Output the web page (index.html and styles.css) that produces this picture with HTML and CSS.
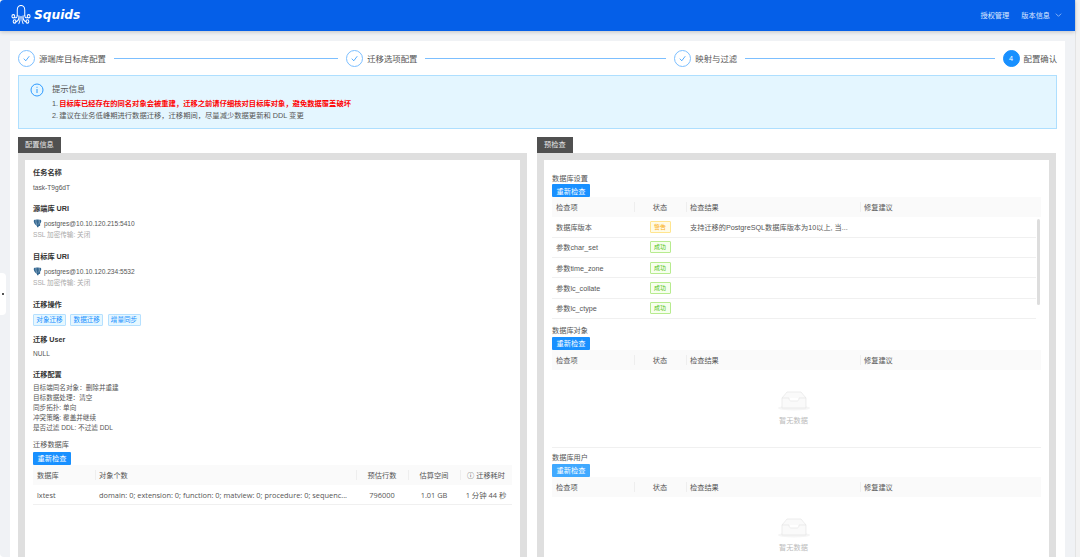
FILE: index.html
```html
<!DOCTYPE html>
<html lang="zh-CN">
  <head>
    <meta charset="UTF-8" />
    <meta name="viewport" content="width=device-width, initial-scale=1.0" />
    <title>Squids</title>
    <link rel="stylesheet" href="styles.css">
  </head>
  <body>
    <div class="app">
      <header class="topbar">
        <div class="brand">
          <svg class="brand-icon" viewBox="0 2 24 20.500" preserveAspectRatio="none" fill="none" stroke="#fff" stroke-width="1.2" stroke-linecap="round">
            <path d="M7.500 12.500V7a4.500 4.500 0 0 1 9 0v5.500" />
            <path d="M7.500 12.500c0 2.500-1.500 3-3.500 2.300" />
            <path d="M9.500 13c.3 3.500-1 5.500-3.500 6" />
            <path d="M11 14c0 3-.5 5.500-1.500 7" />
            <path d="M13 14c0 3 .5 5.500 1.500 7" />
            <path d="M14.500 13c-.3 3.500 1 5.500 3.500 6" />
            <path d="M16.500 12.500c0 2.500 1.500 3 3.500 2.300" />
            <circle cx="2.800" cy="13.500" r="1.700" />
            <circle cx="21.200" cy="13.500" r="1.700" />
            <circle cx="4.300" cy="18.800" r="1.700" />
            <circle cx="19.700" cy="18.800" r="1.700" />
          </svg>
          <span class="brand-name">Squids</span>
        </div>
        <nav class="topnav">
          <span>授权管理</span>
          <span>版本信息
            <svg class="chevron" viewBox="0 0 10 6" fill="none" stroke="#dce8ff" stroke-width="0.9"><path d="M1 1l4 4 4-4" /></svg>
          </span>
        </nav>
      </header>

      <div class="side-handle"><i></i></div>

      <main class="content">
        <section class="card">
          <div class="steps">
            <div class="step">
              <span class="step-icon"><svg viewBox="0 0 12 12" fill="none" stroke="#1890ff" stroke-width="0.8"><path d="M3 6.200l2.200 2.300L9 3.500" /></svg></span>
              <span class="step-label">源端库目标库配置</span>
              <span class="step-line"></span>
            </div>
            <div class="step">
              <span class="step-icon"><svg viewBox="0 0 12 12" fill="none" stroke="#1890ff" stroke-width="0.8"><path d="M3 6.200l2.200 2.300L9 3.500" /></svg></span>
              <span class="step-label">迁移选项配置</span>
              <span class="step-line"></span>
            </div>
            <div class="step">
              <span class="step-icon"><svg viewBox="0 0 12 12" fill="none" stroke="#1890ff" stroke-width="0.8"><path d="M3 6.200l2.200 2.300L9 3.500" /></svg></span>
              <span class="step-label">映射与过滤</span>
              <span class="step-line"></span>
            </div>
            <div class="step step-last">
              <span class="step-icon step-icon-active">4</span>
              <span class="step-label">配置确认</span>
            </div>
          </div>

          <div class="alert">
            <svg class="alert-icon" viewBox="0 0 14 14" fill="none" stroke="#1890ff" stroke-width="0.9">
              <circle cx="7" cy="7" r="6" />
              <path d="M7 6v4M7 3.800v1" />
            </svg>
            <div>
              <div class="alert-title">提示信息</div>
              <ul class="alert-list">
                <li><span class="num">1. </span><span class="danger">目标库已经存在的同名对象会被重建，迁移之前请仔细核对目标库对象，避免数据覆盖破坏</span></li>
                <li><span class="num">2. </span>建议在业务低峰期进行数据迁移，迁移期间，尽量减少数据更新和 DDL 变更</li>
              </ul>
            </div>
          </div>

          <div class="columns">
            <div class="column">
              <span class="panel-tab">配置信息</span>
              <div class="panel">
                <div class="field field-name">
                  <h4>任务名称</h4>
                  <p>task-T9g6dT</p>
                </div>
                <div class="field field-uri">
                  <h4>源端库 URI</h4>
                  <p class="uri">
                    <svg class="pg-icon" viewBox="0 0 12 12"><path fill="#336791" d="M1 2.500C1 1 2.500.6 4 1c1-.5 3-.5 4 0 1.500-.4 3 0 3 1.500 0 1.500-.8 3-1.500 3.500v2.500c0 1-1 1-1.500.5L7 11H5.500L5 8.500C3.500 8.500 1 5 1 2.500z" /><path fill="none" stroke="#fff" stroke-width=".5" d="M4 1.200C3.500 4 4.500 7 5.500 8M8 1.200c.7 2 .5 4-.5 6" /></svg>
                    postgres@10.10.120.215:5410
                  </p>
                  <p class="muted">SSL 加密传输: 关闭</p>
                </div>
                <div class="field field-uri">
                  <h4>目标库 URI</h4>
                  <p class="uri">
                    <svg class="pg-icon" viewBox="0 0 12 12"><path fill="#336791" d="M1 2.500C1 1 2.500.6 4 1c1-.5 3-.5 4 0 1.500-.4 3 0 3 1.500 0 1.500-.8 3-1.500 3.500v2.500c0 1-1 1-1.500.5L7 11H5.500L5 8.500C3.500 8.500 1 5 1 2.500z" /><path fill="none" stroke="#fff" stroke-width=".5" d="M4 1.200C3.500 4 4.500 7 5.500 8M8 1.200c.7 2 .5 4-.5 6" /></svg>
                    postgres@10.10.120.234:5532
                  </p>
                  <p class="muted">SSL 加密传输: 关闭</p>
                </div>
                <div class="field field-ops">
                  <h4>迁移操作</h4>
                  <div class="tags">
                    <span class="tag">对象迁移</span>
                    <span class="tag">数据迁移</span>
                    <span class="tag">增量同步</span>
                  </div>
                </div>
                <div class="field field-user">
                  <h4>迁移 User</h4>
                  <p>NULL</p>
                </div>
                <div class="field field-config">
                  <h4>迁移配置</h4>
                  <p>目标端同名对象：删除并重建</p>
                  <p>目标数据处理：清空</p>
                  <p>同步拓扑: 单向</p>
                  <p>冲突策略: 覆盖并继续</p>
                  <p>是否过滤 DDL: 不过滤 DDL</p>
                </div>
                <div class="sub-title sub-title-db">迁移数据库</div>
                <button class="btn" type="button">重新检查</button>
                <table class="table table-db">
                  <thead>
                    <tr>
                      <th class="col-db">数据库</th>
                      <th>对象个数</th>
                      <th class="col-rows center">预估行数</th>
                      <th class="col-size center">估算空间</th>
                      <th class="col-time center">&#9432; 迁移耗时</th>
                    </tr>
                  </thead>
                  <tbody>
                    <tr>
                      <td>lxtest</td>
                      <td class="nowrap">domain: 0; extension: 0; function: 0; matview: 0; procedure: 0; sequenc...</td>
                      <td class="center">796000</td>
                      <td class="center">1.01 GB</td>
                      <td class="center">1 分钟 44 秒</td>
                    </tr>
                  </tbody>
                </table>
              </div>
            </div>

            <div class="column">
              <span class="panel-tab">预检查</span>
              <div class="panel panel-check">
                <div class="sub-title">数据库设置</div>
                <button class="btn" type="button">重新检查</button>
                <table class="table table-check">
                  <thead>
                    <tr><th class="col-item">检查项</th><th class="col-status center">状态</th><th class="col-result">检查结果</th><th>修复建议</th></tr>
                  </thead>
                </table>
                <div class="scroll-body">
                  <table class="table table-check">
                    <tbody>
                      <tr><td class="col-item">数据库版本</td><td class="col-status center"><span class="status status-warn">警告</span></td><td class="col-result nowrap">支持迁移的PostgreSQL数据库版本为10以上, 当...</td><td></td></tr>
                      <tr><td class="col-item">参数char_set</td><td class="col-status center"><span class="status status-ok">成功</span></td><td></td><td></td></tr>
                      <tr><td class="col-item">参数time_zone</td><td class="col-status center"><span class="status status-ok">成功</span></td><td></td><td></td></tr>
                      <tr><td class="col-item">参数lc_collate</td><td class="col-status center"><span class="status status-ok">成功</span></td><td></td><td></td></tr>
                      <tr><td class="col-item">参数lc_ctype</td><td class="col-status center"><span class="status status-ok">成功</span></td><td></td><td></td></tr>
                    </tbody>
                  </table>
                  <span class="scroll-thumb"></span>
                </div>

                <div class="sub-title sub-title-next">数据库对象</div>
                <button class="btn" type="button">重新检查</button>
                <table class="table table-check">
                  <thead>
                    <tr><th class="col-item">检查项</th><th class="col-status center">状态</th><th class="col-result">检查结果</th><th>修复建议</th></tr>
                  </thead>
                </table>
                <div class="empty">
                  <svg class="empty-icon" viewBox="0 0 32 20"><ellipse cx="16" cy="17" rx="16" ry="2.500" fill="#f5f5f5" /><path fill="#fafafa" stroke="#e3e3e3" stroke-width=".6" d="M4 7l5-6h14l5 6v10H4z" /><path fill="#fff" stroke="#e3e3e3" stroke-width=".6" d="M4 7h7c0 2 1 3 2 3h6c1 0 2-1 2-3h7" /></svg>
                  <span>暂无数据</span>
                </div>

                <div class="sub-title">数据库用户</div>
                <button class="btn btn-light" type="button">重新检查</button>
                <table class="table table-check">
                  <thead>
                    <tr><th class="col-item">检查项</th><th class="col-status center">状态</th><th class="col-result">检查结果</th><th>修复建议</th></tr>
                  </thead>
                </table>
                <div class="empty">
                  <svg class="empty-icon" viewBox="0 0 32 20"><ellipse cx="16" cy="17" rx="16" ry="2.500" fill="#f5f5f5" /><path fill="#fafafa" stroke="#e3e3e3" stroke-width=".6" d="M4 7l5-6h14l5 6v10H4z" /><path fill="#fff" stroke="#e3e3e3" stroke-width=".6" d="M4 7h7c0 2 1 3 2 3h6c1 0 2-1 2-3h7" /></svg>
                  <span>暂无数据</span>
                </div>
              </div>
            </div>
          </div>
        </section>
      </main>
    </div>
    <div class="page-scrollbar"></div>
  </body>
</html>
```

FILE: styles.css
```css
* {
  box-sizing: border-box;
}
html,
body {
  height: 100%;
  margin: 0;
  overflow: hidden;
}
body {
  display: flex;
  background-color: #fff;
  color: #555;
  font-family: "Liberation Sans", "Noto Sans CJK SC", sans-serif;
  font-size: 7.2px;
}
h4,
p,
ul {
  margin: 0;
  padding: 0;
}
.app {
  position: relative;
  flex: 1;
  min-width: 0;
  background-color: #f0f2f5;
  border-radius: 4px 0 0 4px;
}
.page-scrollbar {
  width: 5px;
  background-color: #f3f3f3;
  border-left: 1px solid #e4e4e4;
}

/* 頂部導航 */
.topbar {
  height: 31px;
  padding: 0 13px 1px 11px;
  display: flex;
  align-items: center;
  justify-content: space-between;
  background-color: #055fe8;
  border-top-left-radius: 4px;
  box-shadow: 0 1px 4px rgba(0, 0, 0, 0.2);
}
.brand {
  display: flex;
  align-items: center;
  gap: 3px;
}
.brand-icon {
  width: 20px;
  height: 20px;
}
.brand-name {
  color: #fff;
  font-family: "DejaVu Sans", sans-serif;
  font-size: 12.200px;
  font-weight: 700;
  font-style: italic;
}
.topnav {
  display: flex;
  gap: 12px;
  color: #dce8ff;
}
.chevron {
  width: 7px;
  height: 4px;
  margin-left: 3px;
  vertical-align: 1px;
}
.side-handle {
  position: absolute;
  left: 0;
  top: 273px;
  width: 6px;
  height: 42px;
  display: flex;
  align-items: center;
  justify-content: center;
  background-color: #fff;
  border-radius: 0 4px 4px 0;
}
.side-handle i {
  width: 2px;
  height: 2px;
  background-color: #555;
}

/* 內容卡片 */
.content {
  padding: 10px 10px 0;
}
.card {
  height: 520px;
  padding: 8px;
  background-color: #fff;
}
.steps {
  display: flex;
  height: 18px;
  align-items: center;
}
.step {
  flex: 1;
  display: flex;
  align-items: center;
}
.step-last {
  flex: none;
}
.step-icon {
  width: 17px;
  height: 17px;
  flex: none;
  display: flex;
  align-items: center;
  justify-content: center;
  border: 1px solid #7cbfff;
  border-radius: 50%;
}
.step-icon svg {
  width: 11px;
  height: 11px;
}
.step-icon-active {
  background-color: #1890ff;
  border-color: #1890ff;
  color: #fff;
  font-size: 7.2px;
}
.step-label {
  margin-left: 4px;
  color: #555;
  font-size: 8.4px;
  white-space: nowrap;
}
.step-line {
  flex: 1;
  height: 1px;
  margin: 0 8px;
  background-color: #7cbfff;
}

/* 提示信息 */
.alert {
  display: flex;
  gap: 8px;
  height: 54px;
  margin-top: 8px;
  padding: 7px 11px;
  background-color: #e4f6ff;
  border: 1px solid #aedfff;
}
.alert-icon {
  width: 14px;
  height: 14px;
  flex: none;
}
.alert-title {
  color: #555;
  font-size: 8.4px;
  line-height: 12px;
  margin-bottom: 3px;
}
.alert-list {
  list-style: none;
  font-size: 7.3px;
  line-height: 12px;
}
.num {
  margin-right: -1px;
}
.danger {
  color: #f00;
  font-weight: 700;
}

/* 左右欄 */
.columns {
  display: grid;
  grid-template-columns: 509px 519px;
  gap: 10px;
  margin-top: 8px;
}
.panel-tab {
  display: inline-block;
  height: 16px;
  padding: 0 7px;
  line-height: 16px;
  background-color: #505050;
  color: #e8e8e8;
  font-size: 7.2px;
  vertical-align: top;
}
.panel {
  height: 420px;
  padding: 8.300px 8px 0;
  background-color: #fff;
  border: 7px solid #dfdfdf;
  border-bottom: 0;
}
.field h4 {
  color: #333;
  font-size: 7.2px;
  font-weight: 700;
  line-height: 10px;
}
.field p {
  font-size: 6.6px;
  line-height: 10px;
}
.field-name {
  height: 35.400px;
}
.field-name p {
  margin-top: 4.500px;
}
.field-uri {
  height: 48px;
}
.uri {
  display: flex;
  align-items: center;
  gap: 2px;
  margin-top: 5px;
}
.field .muted {
  margin-top: 1px;
  color: #aaa;
}
.pg-icon {
  width: 9px;
  height: 9px;
  flex: none;
}
.field-ops {
  height: 35.300px;
}
.tags {
  display: flex;
  gap: 4.300px;
  margin-top: 4px;
}
.tag {
  height: 12px;
  padding: 0 2.300px;
  line-height: 10px;
  color: #1890ff;
  background-color: #e6f7ff;
  border: 1px solid #b5e0ff;
  border-radius: 1px;
  font-size: 6.6px;
}
.field-user {
  height: 35px;
}
.field-user p {
  margin-top: 4px;
}
.field-config {
  height: 70.500px;
}
.field-config p {
  line-height: 9.800px;
}
.field-config h4 {
  margin-bottom: 3.500px;
}
.sub-title {
  color: #555;
  font-size: 7.2px;
  line-height: 10.500px;
}
.sub-title-db {
  margin-bottom: 1px;
}
.sub-title-next {
  margin-top: 8px;
}
.btn {
  display: block;
  width: 38px;
  height: 13px;
  padding: 0;
  border: 0;
  border-radius: 1px;
  background-color: #1890ff;
  color: #fff;
  font-family: inherit;
  font-size: 7.200px;
}
.btn-light {
  background-color: #40a9ff;
}

/* 表格 */
.table {
  width: 100%;
  border-collapse: collapse;
  table-layout: fixed;
}
.table th {
  position: relative;
  height: 20px;
  padding: 0 4px;
  background-color: #fafafa;
  color: #555;
  font-weight: 400;
  text-align: left;
}
.table th + th::before {
  content: "";
  position: absolute;
  left: 0;
  top: 5px;
  height: 10px;
  width: 1px;
  background-color: #eee;
}
.table td {
  height: 20.250px;
  padding: 0 4px;
  border-bottom: 1px solid #f0f0f0;
  color: #555;
}
.table .center {
  text-align: center;
}
.nowrap {
  white-space: nowrap;
}
.col-db {
  width: 62px;
}
.col-rows,
.col-size,
.col-time,
.col-status {
  width: 52px;
}
.col-item {
  width: 82px;
}
.col-result {
  width: 174px;
}
.table-db td {
  height: 20px;
  font-family: "Open Sans", "Noto Sans CJK SC", sans-serif;
  font-size: 7.4px;
}
.panel-check {
  padding-top: 13.500px;
}
.scroll-body {
  position: relative;
  height: 101.250px;
  padding-right: 5.500px;
}
.scroll-thumb {
  position: absolute;
  right: 1px;
  top: 1.500px;
  width: 3px;
  height: 86px;
  background-color: #ddd;
  border-radius: 2px;
}
.status {
  display: inline-block;
  width: 21px;
  height: 12px;
  line-height: 10px;
  border: 1px solid;
  border-radius: 1px;
  font-size: 6px;
  text-align: center;
}
.status-warn {
  color: #faad14;
  background-color: #fffbe6;
  border-color: #ffe58f;
}
.status-ok {
  color: #52c41a;
  background-color: #f6ffed;
  border-color: #b7eb8f;
}
.empty {
  height: 78.500px;
  padding: 21px 6px 0 0;
  display: flex;
  flex-direction: column;
  align-items: center;
  gap: 4px;
  border-bottom: 1px solid #f0f0f0;
  color: #bbb;
  font-size: 7.2px;
}
.empty-icon {
  width: 32px;
  height: 20px;
}
.empty + .sub-title {
  margin-top: 5px;
}
```
